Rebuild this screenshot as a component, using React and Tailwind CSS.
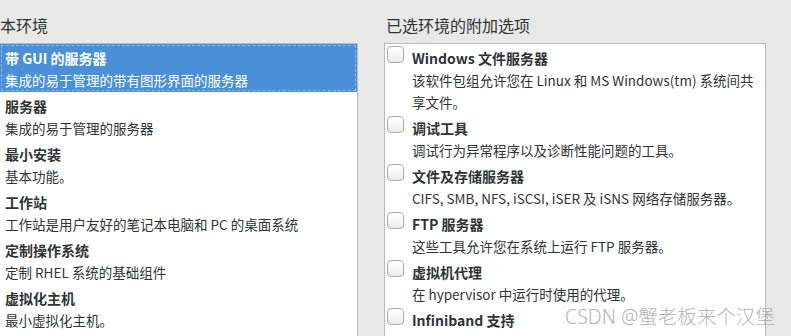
import React from "react";

const font = { fontFamily: '"Noto Sans CJK SC", "Noto Sans", sans-serif' };

const envs = [
  { t: "带 GUI 的服务器", d: "集成的易于管理的带有图形界面的服务器", sel: true },
  { t: "服务器", d: "集成的易于管理的服务器" },
  { t: "最小安装", d: "基本功能。" },
  { t: "工作站", d: "工作站是用户友好的笔记本电脑和 PC 的桌面系统" },
  { t: "定制操作系统", d: "定制 RHEL 系统的基础组件" },
  { t: "虚拟化主机", d: "最小虚拟化主机。" },
];

const addons = [
  { t: "Windows 文件服务器", d: ["该软件包组允许您在 Linux 和 MS Windows(tm) 系统间共", "享文件。"] },
  { t: "调试工具", d: ["调试行为异常程序以及诊断性能问题的工具。"] },
  { t: "文件及存储服务器", d: ["CIFS, SMB, NFS, iSCSI, iSER 及 iSNS 网络存储服务器。"] },
  { t: "FTP 服务器", d: ["这些工具允许您在系统上运行 FTP 服务器。"] },
  { t: "虚拟机代理", d: ["在 hypervisor 中运行时使用的代理。"] },
  { t: "Infiniband 支持", d: [] },
];

export default function App() {
  return (
    <div
      className="relative w-[791px] h-[336px] overflow-hidden bg-[#e8e8e7] text-[#2e3436]"
      style={font}
    >
      <div className="flex">
        {/* Left column */}
        <div className="w-[358px] shrink-0 flex flex-col">
          <div className="pt-[14px] h-[43px] text-[16px] leading-[22px] whitespace-nowrap">
            本环境
          </div>
          <div className="bg-white border-t border-r border-[#b9b9b6] h-[400px]">
            {envs.map((e, i) => (
              <div
                key={i}
                className={
                  e.sel
                    ? "bg-[#4a90d9] text-white pl-[5px] pt-[3px] pb-[1px] h-[48px] outline-1 outline-dashed outline-[#8ab8ea] -outline-offset-2"
                    : "pl-[5px] pt-[3px] pb-[1px] h-[48px]"
                }
              >
                <div className="text-[14px] font-bold leading-[22px] whitespace-nowrap">{e.t}</div>
                <div className="text-[13.5px] leading-[22px] whitespace-nowrap">{e.d}</div>
              </div>
            ))}
          </div>
        </div>

        {/* Right column */}
        <div className="ml-[26px] w-[382px] shrink-0 flex flex-col">
          <div className="pt-[14px] h-[43px] pl-[2px] text-[16px] leading-[22px] whitespace-nowrap">
            已选环境的附加选项
          </div>
          <div className="bg-white border border-[#b9b9b6] h-[400px]">
            {addons.map((a, i) => (
              <div key={i} className="flex pt-[3px] pb-[1px]">
                <div className="ml-[2px] mt-[-1px] w-[17px] h-[17px] shrink-0 rounded-[4px] border border-[#a9a9a6] bg-gradient-to-b from-white to-[#ececea]" />
                <div className="ml-[8px] flex flex-col">
                  <div className="text-[14px] font-bold leading-[22px] whitespace-nowrap">{a.t}</div>
                  {a.d.map((l, j) => (
                    <div key={j} className="text-[13.5px] leading-[22px] whitespace-nowrap">{l}</div>
                  ))}
                </div>
              </div>
            ))}
          </div>
        </div>
      </div>

      {/* Watermark */}
      <div
        className="absolute left-[565px] top-[303px] text-[19.5px] leading-[28px] text-[#a3a3a3] opacity-80 whitespace-nowrap"
        style={{ fontFamily: '"Noto Sans", "Noto Sans CJK SC", sans-serif', fontWeight: 300 }}
      >
        CSDN @蟹老板来个汉堡
      </div>
    </div>
  );
}
